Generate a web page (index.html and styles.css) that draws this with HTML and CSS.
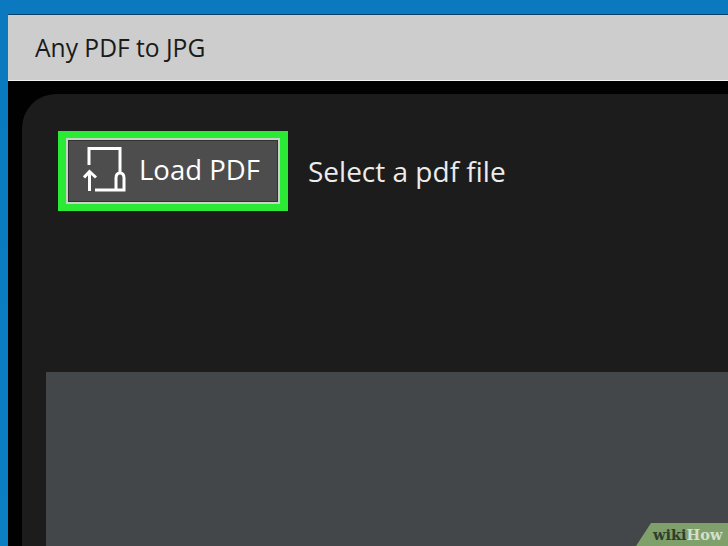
FILE: index.html
```html
<!DOCTYPE html>
<html lang="en">
<head>
<meta charset="utf-8">
<title>Any PDF to JPG</title>
<link rel="stylesheet" href="styles.css">
</head>
<body>
<div class="window">
  <header class="titlebar">Any PDF to JPG</header>
  <main class="panel">
    <div class="toolbar">
      <div class="highlight">
        <button class="load-btn" type="button">
          <svg class="load-icon" width="44" height="50" viewBox="0 0 44 50" fill="none" stroke="#fff" stroke-width="3">
            <path d="M6 19V2.500H37V27"/>
            <path d="M12 44H41V32Q41 27 37 27Q33 27 33 32V44"/>
            <path d="M6.500 45V25M1 31.500L6.500 25.500L13 31.500"/>
          </svg>
          <span class="load-label">Load PDF</span>
        </button>
      </div>
      <span class="hint">Select a pdf file</span>
    </div>
    <div class="preview"></div>
  </main>
</div>
<div class="wikihow"><b class="wiki">wiki</b><b class="how">How</b></div>
</body>
</html>
```

FILE: styles.css
```css
* { box-sizing: border-box; }
html, body { margin: 0; height: 100%; }
body {
  width: 728px;
  height: 546px;
  overflow: hidden;
  position: relative;
  background: linear-gradient(#0a79bf, #0b7fc4);
  padding: 14px 0 0 8px;
  font-family: "Open Sans", "Noto Sans", sans-serif;
}
.window {
  height: 532px;
  background: #010101;
  border-top: 1px solid #0c3f66;
  display: flex;
  flex-direction: column;
}
.titlebar {
  height: 66px;
  flex: none;
  background: #cdcdcd;
  border-bottom: 1px solid #f4f4f4;
  padding: 0 0 0 27px;
  display: flex;
  align-items: center;
  font-size: 24.6px;
  color: #1a1a1a;
}
.panel {
  flex: 1;
  margin: 13px 0 0 14px;
  background: #1c1c1c;
  border-top-left-radius: 34px;
  padding: 37px 0 0 24px;
  display: flex;
  flex-direction: column;
}
.toolbar {
  display: flex;
  align-items: center;
  margin-left: 12px;
  gap: 20px;
}
.highlight {
  width: 230px;
  height: 80px;
  background: #2bea35;
  padding: 7px 8px;
}
.load-btn {
  width: 100%;
  height: 100%;
  margin: 0;
  padding: 0 0 0 15px;
  display: flex;
  align-items: center;
  gap: 12px;
  background: #4d4d4d;
  border: 2px solid #c8d4c8;
  outline: 1px solid #333;
  outline-offset: -3px;
  color: #fff;
  font: inherit;
  font-size: 27.500px;
}
.load-label { padding-bottom: 4px; }
.load-icon { flex: none; }
.hint {
  font-size: 28px;
  color: #ececec;
}
.preview {
  flex: 1;
  margin-top: 161px;
  background: #43474a;
}
.wikihow {
  position: absolute;
  right: 0;
  bottom: 0;
  width: 92px;
  height: 23px;
  background: #7fa06b;
  clip-path: polygon(15px 0, 100% 0, 100% 100%, 0 100%);
  padding: 2px 0 0 17px;
  font-family: "DejaVu Serif", "Liberation Serif", serif;
  font-size: 14.500px;
  line-height: 20px;
  white-space: nowrap;
}
.wiki { color: #2f3e2c; }
.how { color: #d3dfcb; }
```
